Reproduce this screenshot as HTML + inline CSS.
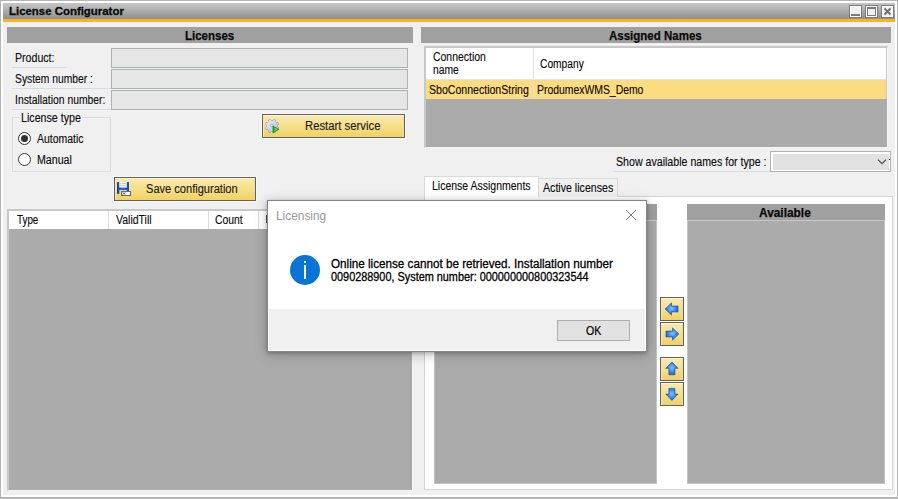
<!DOCTYPE html>
<html><head><meta charset="utf-8"><title>License Configurator</title>
<style>
html,body{margin:0;padding:0}
body{width:898px;height:499px;overflow:hidden;position:relative;background:#f0f0f0;font-family:"Liberation Sans",sans-serif;font-size:12px}
.a{position:absolute;box-sizing:border-box}
.t{position:absolute;white-space:pre;line-height:16px;transform-origin:0 0;display:block;-webkit-text-stroke:.12px currentColor}
.frame{left:0;top:0;width:898px;height:499px;border:1px solid #b4b4b4;border-bottom-width:2px}
.frame2{left:1px;top:1px;width:896px;height:496px;border:2px solid #fff}
.titlebar{left:3px;top:3px;width:892px;height:16px;background:linear-gradient(#c3c4c3,#b9bab9 25%,#929292 92%,#8b90a2 96%)}
.orange{left:3px;top:19px;width:892px;height:3px;background:#fcb714}
.oline{left:3px;top:22px;width:892px;height:1px;background:#eef0f6}
.wb{top:5px;width:13px;height:13px;border:1px solid #7d7d7d;background:#f1f1f1;box-shadow:inset 0 0 0 1px #fff}
.hdr{background:#a0a0a0;height:16px}
.inp{left:111px;width:297px;height:20px;border:1px solid #adb2b5;background:#e6e6e6}
.uln{height:1px;background:#d5dbe3}
.grey{background:#ababab}
.ybtn{border:1px solid #60606a;background:linear-gradient(#f9eab0,#f6df8a 50%,#f2d163);box-shadow:inset 0 1px 0 #fcf3cf, inset 1px 0 0 #f9e9a8, inset -1px 0 0 #f4dc85, 0 0 0 1px rgba(255,255,255,.55)}
.radio{left:18px;width:13px;height:13px;border-radius:50%;border:1px solid #333;background:#fff}
.radio.on::after{content:"";position:absolute;left:2px;top:2px;width:7px;height:7px;border-radius:50%;background:#333}

</style></head>
<body>
<div class="a frame"></div><div class="a frame2"></div>
<div class="a titlebar"></div><div class="a orange"></div><div class="a oline"></div>
<span class="t" style="left:9.11px;top:3.0px;font-weight:bold;font-size:11.5px;color:#0a0a0a;transform:scaleX(0.993);-webkit-text-stroke:.3px currentColor;">License Configurator</span>
<!-- window buttons -->
<div class="a wb" style="left:849px"><div class="a" style="left:1px;top:8px;width:9px;height:2px;background:#7a7a7a"></div></div>
<div class="a wb" style="left:865px"><div class="a" style="left:1px;top:1px;width:9px;height:9px;border:1px solid #7a7a7a;border-top-width:2px"></div></div>
<div class="a wb" style="left:881px"><svg class="a" style="left:0;top:0" width="11" height="11" viewBox="0 0 11 11"><path d="M2.5 2.5L8.5 8.5M8.5 2.5L2.5 8.5" stroke="#6e6e6e" stroke-width="1.8" fill="none"/></svg></div>

<!-- LEFT PANEL -->
<div class="a hdr" style="left:7px;top:27px;width:406px"></div><span class="t" style="left:184.84px;top:27.8px;font-weight:bold;font-size:12px;color:#0a0a0a;transform:scaleX(0.958);-webkit-text-stroke:.25px currentColor;">Licenses</span>
<div class="a inp" style="top:48px"></div><div class="a inp" style="top:69px"></div><div class="a inp" style="top:90px"></div>
<div class="a uln" style="left:12px;top:67px;width:55px"></div>
<div class="a uln" style="left:12px;top:88px;width:99px"></div>
<div class="a uln" style="left:12px;top:109px;width:99px"></div>
<span class="t" style="left:15.12px;top:50.0px;font-weight:normal;font-size:12px;color:#0a0a0a;transform:scaleX(0.8837);">Product:</span><span class="t" style="left:15.14px;top:71.0px;font-weight:normal;font-size:12px;color:#0a0a0a;transform:scaleX(0.8596);">System number :</span><span class="t" style="left:15.14px;top:92.0px;font-weight:normal;font-size:12px;color:#0a0a0a;transform:scaleX(0.8631);">Installation number:</span>
<div class="a" style="left:12px;top:117px;width:99px;height:55px;border:1px solid #dcdcdc"></div>
<div class="a" style="left:19px;top:114px;width:63px;height:8px;background:#f0f0f0"></div>
<span class="t" style="left:21.31px;top:110.0px;font-weight:normal;font-size:12px;color:#0a0a0a;transform:scaleX(0.8894);">License type</span>
<div class="a radio on" style="top:132px"></div><span class="t" style="left:37.1px;top:130.5px;font-weight:normal;font-size:12px;color:#0a0a0a;transform:scaleX(0.8717);">Automatic</span>
<div class="a radio" style="top:153px"></div><span class="t" style="left:37.41px;top:151.5px;font-weight:normal;font-size:12px;color:#0a0a0a;transform:scaleX(0.8868);">Manual</span>
<div class="a ybtn" style="left:262px;top:114px;width:143px;height:24px"></div><svg class="a" style="left:265px;top:119px" width="15" height="15" viewBox="0 0 15 15"><defs><linearGradient id="gg" x1="0" y1="0" x2="1" y2="1"><stop offset="0" stop-color="#f4f4ff"/><stop offset=".55" stop-color="#cfd0ee"/><stop offset="1" stop-color="#a9abd8"/></linearGradient><linearGradient id="gp" x1="0" y1="0" x2="1" y2="0"><stop offset="0" stop-color="#1f8f22"/><stop offset=".5" stop-color="#6ad860"/><stop offset="1" stop-color="#2aa62a"/></linearGradient></defs>
<path fill-rule="evenodd" d="M7.86 1.57L8.61 0.29L10.61 1.12L10.23 2.55L11.45 3.77L12.88 3.39L13.71 5.39L12.43 6.14L12.43 7.86L13.71 8.61L12.88 10.61L11.45 10.23L10.23 11.45L10.61 12.88L8.61 13.71L7.86 12.43L6.14 12.43L5.39 13.71L3.39 12.88L3.77 11.45L2.55 10.23L1.12 10.61L0.29 8.61L1.57 7.86L1.57 6.14L0.29 5.39L1.12 3.39L2.55 3.77L3.77 2.55L3.39 1.12L5.39 0.29L6.14 1.57ZM6.6 5.1A1.4 1.4 0 1 0 6.61 5.1Z" fill="url(#gg)" stroke="#8688c6" stroke-width=".6" stroke-opacity=".9"/>
<path d="M7.3 6.6V14.2" stroke="#ececfa" stroke-width=".8"/>
<path d="M7.9 7.1L14 10.4L7.9 13.9Z" fill="url(#gp)" stroke="#1d861d" stroke-width=".7" stroke-linejoin="round"/></svg><span class="t" style="left:304.86px;top:118.0px;font-weight:normal;font-size:12px;color:#1a1a1a;transform:scaleX(0.943);">Restart service</span>
<div class="a ybtn" style="left:114px;top:177px;width:142px;height:24px"></div><svg class="a" style="left:116px;top:181px" width="16" height="16" viewBox="0 0 16 16"><defs><linearGradient id="fb" x1="0" y1="0" x2="1" y2="0"><stop offset="0" stop-color="#0a3fb0"/><stop offset=".5" stop-color="#2a6ae8"/><stop offset="1" stop-color="#1048c4"/></linearGradient></defs>
<path d="M1 1.6Q1 1 1.6 1H12.4Q13 1 13 1.6V12.4Q13 13 12.4 13H10.7V9H3.3V13H1.8L1 12.2Z" fill="url(#fb)"/>
<rect x="3.2" y="1" width="7.6" height="5.6" fill="#f4f4f4"/>
<rect x="4.4" y="2.2" width="5.2" height=".9" fill="#c4c4c4"/><rect x="4.4" y="4.2" width="5.2" height=".9" fill="#c8c8c8"/>
<rect x="5.5" y="10.5" width="9" height="4" fill="#fff" stroke="#686868" stroke-width="1"/>
<path d="M6.8 11.3L9.2 13.7M9.2 11.3L6.8 13.7" stroke="#333" stroke-width=".8"/>
<rect x="9.6" y="11.4" width="4.2" height="2.2" fill="#fff"/></svg><span class="t" style="left:146.18px;top:181.0px;font-weight:normal;font-size:12px;color:#1a1a1a;transform:scaleX(0.9224);">Save configuration</span>
<!-- left grid -->
<div class="a" style="left:7px;top:209px;width:406px;height:282px;border:solid #c8c8c8;border-width:2px 1px 1px 2px;border-right-color:#f7f7f7;border-bottom-color:#f7f7f7;background:#ababab"></div>
<div class="a" style="left:9px;top:211px;width:403px;height:18px;background:#fff"></div>
<div class="a" style="left:108px;top:211px;width:1px;height:18px;background:#dcdcdc"></div>
<div class="a" style="left:208px;top:211px;width:1px;height:18px;background:#dcdcdc"></div>
<div class="a" style="left:258px;top:211px;width:1px;height:18px;background:#dcdcdc"></div>
<span class="t" style="left:17.3px;top:211.5px;font-weight:normal;font-size:12px;color:#0a0a0a;transform:scaleX(0.8192);">Type</span><span class="t" style="left:116.1px;top:211.5px;font-weight:normal;font-size:12px;color:#0a0a0a;transform:scaleX(0.875);">ValidTill</span><span class="t" style="left:215.2px;top:211.5px;font-weight:normal;font-size:12px;color:#0a0a0a;transform:scaleX(0.8625);">Count</span>
<div class="a" style="left:266px;top:215px;width:1px;height:8px;background:#555"></div>

<!-- RIGHT PANEL -->
<div class="a hdr" style="left:421px;top:27px;width:470px"></div><span class="t" style="left:609.2px;top:27.8px;font-weight:bold;font-size:12px;color:#0a0a0a;transform:scaleX(0.9588);-webkit-text-stroke:.25px currentColor;">Assigned Names</span>
<div class="a" style="left:424px;top:46px;width:464px;height:102px;border:solid #c8c8c8;border-width:2px 1px 1px 2px;border-right-color:#f7f7f7;border-bottom-color:#f7f7f7;background:#ababab"></div>
<div class="a" style="left:426px;top:48px;width:460px;height:31px;background:#fff"></div>
<div class="a" style="left:426px;top:79px;width:460px;height:1px;background:#e4e4e4"></div>
<div class="a" style="left:426px;top:80px;width:460px;height:19px;background:#fcdc80"></div>
<div class="a" style="left:886px;top:48px;width:1px;height:51px;background:#c8c8c8"></div>
<div class="a" style="left:533px;top:48px;width:1px;height:51px;background:#e0e0e0"></div>
<span class="t" style="left:433.3px;top:49.0px;font-weight:normal;font-size:12px;color:#0a0a0a;transform:scaleX(0.8717);">Connection</span><span class="t" style="left:432.74px;top:62.0px;font-weight:normal;font-size:12px;color:#0a0a0a;transform:scaleX(0.8621);">name</span><span class="t" style="left:540.4px;top:56.0px;font-weight:normal;font-size:12px;color:#0a0a0a;transform:scaleX(0.8529);">Company</span><span class="t" style="left:428.72px;top:81.5px;font-weight:normal;font-size:12px;color:#0a0a0a;transform:scaleX(0.8804);">SboConnectionString</span><span class="t" style="left:537.33px;top:81.5px;font-weight:normal;font-size:12px;color:#0a0a0a;transform:scaleX(0.8672);">ProdumexWMS_Demo</span>
<div class="a uln" style="left:613px;top:171px;width:157px"></div>
<span class="t" style="left:615.51px;top:154.0px;font-weight:normal;font-size:12px;color:#0a0a0a;transform:scaleX(0.8851);">Show available names for type :</span>
<div class="a" style="left:770px;top:151px;width:121px;height:21px;border:1px solid #adb3b3;background:#fff"><div class="a" style="left:2px;top:2px;width:116px;height:16px;background:#e1e1e1"></div><div class="a" style="left:118px;top:7px;width:1px;height:1px;background:#222"></div>
<svg class="a" style="left:105px;top:6px" width="12" height="8" viewBox="0 0 12 8"><path d="M2 1.7L6 5.7L10 1.7" stroke="#444" stroke-width="1.1" fill="none"/></svg></div>
<!-- tabs -->
<div class="a" style="left:424px;top:196px;width:469px;height:294px;border:1px solid #d4d4d4;background:#fff"></div>
<div class="a" style="left:538px;top:178px;width:80px;height:19px;border:1px solid #d9d9d9;border-bottom:none;background:#f0f0f0"></div>
<div class="a" style="left:424px;top:176px;width:115px;height:21px;border:1px solid #d9d9d9;border-bottom:none;background:#fff"></div>
<span class="t" style="left:432.33px;top:177.5px;font-weight:normal;font-size:12px;color:#0a0a0a;transform:scaleX(0.8741);">License Assignments</span><span class="t" style="left:543.1px;top:179.5px;font-weight:normal;font-size:12px;color:#0a0a0a;transform:scaleX(0.8848);">Active licenses</span>
<!-- lists -->
<div class="a" style="left:434px;top:204px;width:223px;height:280px;background:#ababab;border:1px solid #c4c4c4;border-top:none"></div>
<div class="a" style="left:434px;top:204px;width:223px;height:16px;background:#a0a0a0"></div>
<div class="a" style="left:434px;top:220px;width:223px;height:1px;background:#c8c8c8"></div>
<div class="a" style="left:687px;top:204px;width:198px;height:280px;background:#ababab;border:1px solid #c4c4c4;border-top:none"></div>
<div class="a" style="left:687px;top:204px;width:198px;height:16px;background:#a0a0a0"></div>
<div class="a" style="left:687px;top:220px;width:198px;height:1px;background:#c8c8c8"></div>
<span class="t" style="left:759.4px;top:204.6px;font-weight:bold;font-size:12px;color:#0a0a0a;transform:scaleX(0.9904);-webkit-text-stroke:.25px currentColor;">Available</span>
<!-- arrow buttons -->
<svg class="a" width="0" height="0"><defs><radialGradient id="g1" cx=".5" cy=".45" r=".6"><stop offset="0" stop-color="#86c6fa"/><stop offset=".5" stop-color="#3c8cea"/><stop offset="1" stop-color="#165acc"/></radialGradient></defs></svg>
<div class="a ybtn" style="left:660px;top:297px;width:24px;height:24px"><svg class="a" style="left:0;top:0" width="22" height="22" viewBox="0 0 22 22"><path d="M4.2 11L10.5 4.9V8.1H17V13.9H10.5V17.1Z" fill="url(#g1)" stroke="#1452c0" stroke-width=".7"/></svg></div>
<div class="a ybtn" style="left:660px;top:322px;width:24px;height:24px"><svg class="a" style="left:0;top:0" width="22" height="22" viewBox="0 0 22 22"><path d="M17.8 11L11.5 4.9V8.1H5V13.9H11.5V17.1Z" fill="url(#g1)" stroke="#1452c0" stroke-width=".7"/></svg></div>
<div class="a ybtn" style="left:660px;top:357px;width:24px;height:24px"><svg class="a" style="left:0;top:0" width="22" height="22" viewBox="0 0 22 22"><path d="M10.9 4L17 10.3H13.9V16.8H7.9V10.3H4.8Z" fill="url(#g1)" stroke="#1452c0" stroke-width=".7"/></svg></div>
<div class="a ybtn" style="left:660px;top:382px;width:24px;height:24px"><svg class="a" style="left:0;top:0" width="22" height="22" viewBox="0 0 22 22"><path d="M10.9 17.4L17 11.1H13.9V5.4H7.9V11.1H4.8Z" fill="url(#g1)" stroke="#1452c0" stroke-width=".7"/></svg></div>

<!-- DIALOG -->
<div class="a" style="left:267px;top:200px;width:380px;height:152px;border:1px solid #868686;background:#fff;box-shadow:0 1px 4px rgba(0,0,0,.28),0 3px 12px 1px rgba(0,0,0,.17)">
<div class="a" style="left:1px;top:108px;width:376px;height:41px;background:#f0f0f0"></div>
<div class="a" style="left:22px;top:53.7px;width:30px;height:30px;border-radius:50%;background:#0a74d4"></div>
<div class="a" style="left:36px;top:60px;width:2.4px;height:2.4px;background:#fff"></div>
<div class="a" style="left:36px;top:64px;width:2.4px;height:14px;background:#fff"></div>
<svg class="a" style="left:357px;top:8px" width="12" height="12" viewBox="0 0 12 12"><path d="M1 1L11 11M11 1L1 11" stroke="#7a7a7a" stroke-width="1" fill="none"/></svg>
<div class="a" style="left:289px;top:119px;width:73px;height:21px;border:1px solid #adadad;background:#e1e1e1"></div>
</div>
<span class="t" style="left:275.91px;top:208.0px;font-weight:normal;font-size:12px;color:#999999;transform:scaleX(0.9898);-webkit-text-stroke:0;">Licensing</span><span class="t" style="left:330.5px;top:256.0px;font-weight:normal;font-size:12px;color:#000000;transform:scaleX(0.9734);-webkit-text-stroke:.28px currentColor;">Online license cannot be retrieved. Installation number</span><span class="t" style="left:330.5px;top:269.0px;font-weight:normal;font-size:12px;color:#000000;transform:scaleX(0.906);-webkit-text-stroke:.28px currentColor;">0090288900, System number: 000000000800323544</span><span class="t" style="left:586.2px;top:323.0px;font-weight:normal;font-size:12px;color:#000000;transform:scaleX(0.8824);-webkit-text-stroke:.2px currentColor;">OK</span>

</body></html>
